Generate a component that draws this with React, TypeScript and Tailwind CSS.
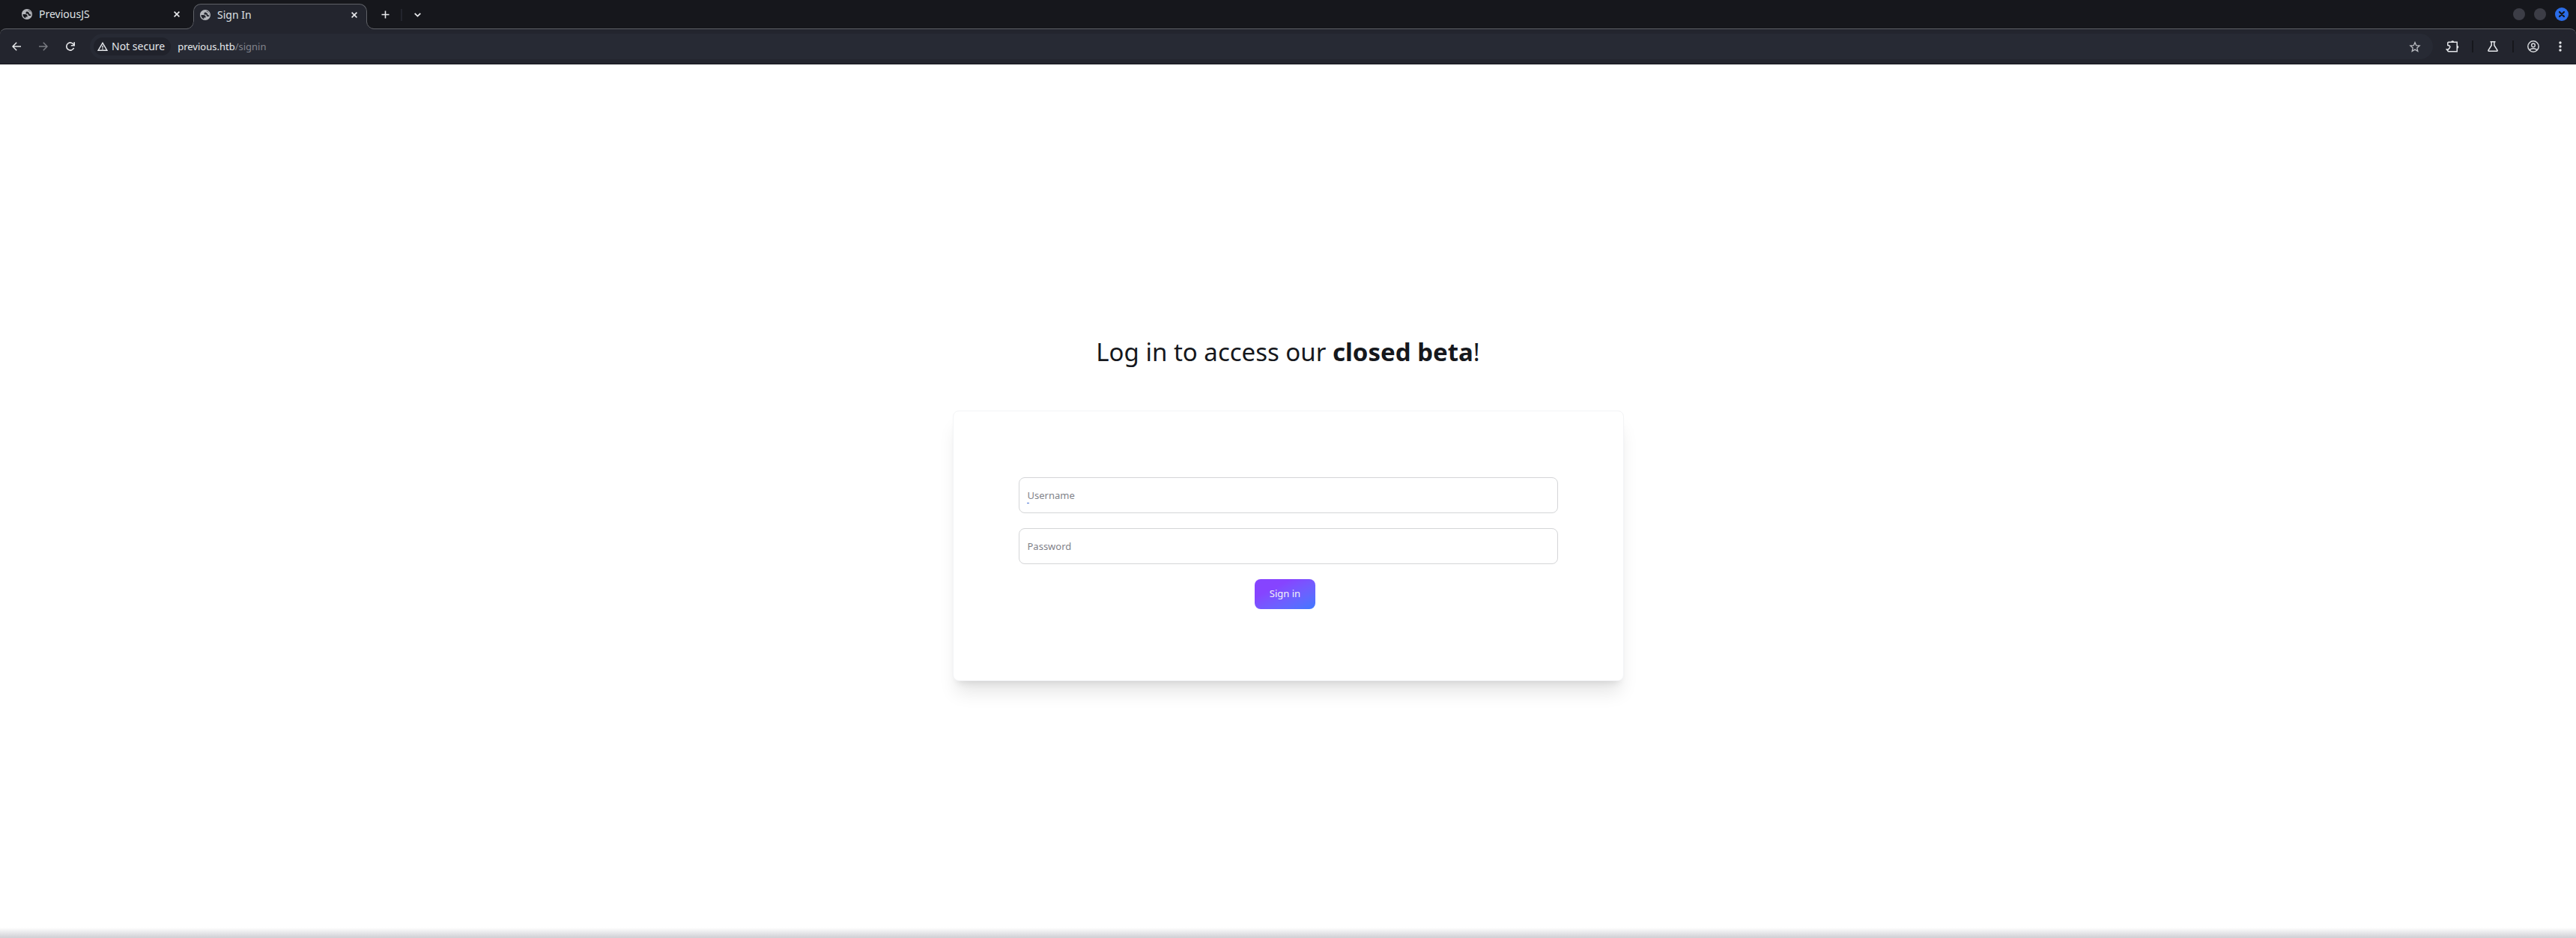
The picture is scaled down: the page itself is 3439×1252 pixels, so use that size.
import { useState } from "react";

type Tab = { id: string; title: string };

const tabs: Tab[] = [
  { id: "home", title: "PreviousJS" },
  { id: "signin", title: "Sign In" },
];

function GlobeIcon() {
  return (
    <svg width="14" height="14" viewBox="2 2 20 20" fill="#b4b6bb" className="shrink-0">
      <path d="M12 2C6.480 2 2 6.480 2 12s4.480 10 10 10 10-4.480 10-10S17.520 2 12 2zM4 12h4.400c3.400.020 4.900 1.730 4.500 5.130H9.500v2.470A8 8 0 0 1 4 12zm16 0c0 .6-.080 1.190-.2 1.760-.650.820-1.480 1.240-2.480 1.240-2.030 0-3.030-.830-3.030-2.500v-1.100h-4.400V9.100q0-2 2-2h1.300c0-1.200.3-2 1-2.500.6-.4 1.100-.3 1.500 0A8 8 0 0 1 20 12z" fillRule="evenodd" />
      <path d="M13.500 4.500L20 8v5l-3-1-1-3-3-2z" />
    </svg>
  );
}

function CloseIcon() {
  return (
    <svg width="8" height="8" viewBox="0 0 8 8" fill="none" stroke="#e8e9ec" strokeWidth="1.6">
      <path d="M.6.6l6.800 6.800M7.400.6L.6 7.400" />
    </svg>
  );
}

function TabStrip({ active, onSelect }: { active: string; onSelect: (id: string) => void }) {
  return (
    <div className="relative flex h-[38px] items-end justify-between bg-[#16171c] pr-[10px]">
      <div className="flex items-end pl-5">
        {tabs.map(t => {
          const on = t.id === active;
          return (
            <div key={t.id}
              className={on
                ? "relative z-10 -mb-px flex h-[34px] w-[232px] items-center rounded-t-[10px] border border-b-0 border-[#5f6167] bg-[#23252e] pr-3 pb-[6px] pl-2"
                : "flex h-[33px] w-[238px] items-center pr-[18px] pb-[6px] pl-[9px]"}>
              {on && (
                <>
                  <svg width="10" height="10" viewBox="0 0 10 10" className="absolute bottom-0 -left-[10px]">
                    <path d="M10 0v10H0V9.500A9.500 9.500 0 0 0 9.500 0z" fill="#23252e" />
                    <path d="M0 9.500A10 10 0 0 0 9.500 0" fill="none" stroke="#5f6167" />
                    <path d="M9.500 0H10v10H9.500z" fill="#23252e" />
                  </svg>
                  <svg width="10" height="10" viewBox="0 0 10 10" className="absolute -right-[10px] bottom-0">
                    <path d="M0 0v10h10V9.500A9.500 9.500 0 0 1 .5 0z" fill="#23252e" />
                    <path d="M10 9.500A10 10 0 0 1 .5 0" fill="none" stroke="#5f6167" />
                  </svg>
                </>
              )}
              <button onClick={() => onSelect(t.id)} className="flex min-w-0 flex-1 items-center gap-[9px] text-left text-sm text-[#dfe1e5]">
                <GlobeIcon />
                {t.title}
              </button>
              <button aria-label={`Close ${t.title}`}><CloseIcon /></button>
            </div>
          );
        })}
        <div className="flex h-[33px] items-center pb-1 pl-[19px]">
          <button aria-label="New tab">
            <svg width="11" height="11" viewBox="0 0 11 11" fill="none" stroke="#e8e9ec" strokeWidth="1.6">
              <path d="M5.500.5v10M.5 5.500h10" />
            </svg>
          </button>
          <span className="ml-[15px] h-4 w-[2px] bg-[#23252e]" />
          <button aria-label="Search tabs" className="ml-4">
            <svg width="9" height="6" viewBox="0 0 9 6" fill="none" stroke="#e8e9ec" strokeWidth="1.8">
              <path d="M.7.8l3.800 3.800L8.300.8" />
            </svg>
          </button>
        </div>
      </div>
      <div className="flex h-[38px] items-center gap-3">
        <button aria-label="Minimize" className="h-4 w-4 rounded-full bg-[#3c3d46]" />
        <button aria-label="Maximize" className="h-4 w-4 rounded-full bg-[#3c3d46]" />
        <button aria-label="Close window" className="flex h-[18px] w-[18px] items-center justify-center rounded-full bg-[#2b6de8]">
          <svg width="8" height="8" viewBox="0 0 8 8" fill="none" stroke="#14161c" strokeWidth="2.200" strokeLinecap="round">
            <path d="M1 1l6 6M7 1L1 7" />
          </svg>
        </button>
      </div>
    </div>
  );
}

function Toolbar() {
  return (
    <div className="bg-[#16171c]">
      <div className="flex h-12 items-center rounded-t-[8px] border-t border-b border-t-[#5f6167] border-b-[#15161b] bg-[#23252e] pr-[19px] pl-4">
        <button aria-label="Back">
          <svg width="12" height="12" viewBox="0 0 12 12" fill="none" stroke="#e8e9ec" strokeWidth="1.500">
            <path d="M12 6H1.200M6.200.8L1 6l5.200 5.200" />
          </svg>
        </button>
        <button aria-label="Forward" className="ml-6">
          <svg width="12" height="12" viewBox="0 0 12 12" fill="none" stroke="#7b7d84" strokeWidth="1.500">
            <path d="M0 6h10.800M5.800.8L11 6l-5.200 5.200" />
          </svg>
        </button>
        <button aria-label="Reload" className="ml-6">
          <svg width="12" height="12" viewBox="0 0 12 12" fill="none" stroke="#e8e9ec" strokeWidth="1.600">
            <path d="M10.600 8A5.100 5.100 0 1 1 10.300 3.400L11 4.600" />
            <path d="M11.200.2v4.600H6.800" />
          </svg>
        </button>
        <div className="ml-5 flex h-[34px] flex-1 items-center rounded-full bg-[#272a34] pr-4 pl-[5px]">
          <button className="flex h-6 items-center gap-[5px] rounded-full bg-[#20222b] pr-2 pl-[5px] text-sm text-[#e4e6ea]">
            <svg width="14" height="12" viewBox="0 0 14 12" fill="none" stroke="#e4e6ea" strokeWidth="1.400">
              <path d="M7 1.300L1.200 11.200h11.600z" />
              <path d="M7 4.700v3.100M7 8.500v1.400" />
            </svg>
            Not secure
          </button>
          <p className="ml-[9px] flex-1 pt-px text-[13px] text-[#e8eaed]">
            previous.htb<span className="text-[#82848c]">/signin</span>
          </p>
          <button aria-label="Bookmark this page">
            <svg width="16" height="15" viewBox="0 0 16 15" fill="none" stroke="#b9bbc1" strokeWidth="1.300">
              <path d="M8 1.600l1.700 4.100 4.400.4-3.300 2.900 1 4.400L8 11.100l-3.800 2.300 1-4.400L1.900 6.100l4.400-.4z" />
            </svg>
          </button>
        </div>
        <button aria-label="Extensions" className="ml-[17px]">
          <svg width="18" height="17" viewBox="0 0 18 17" fill="none" stroke="#e4e6ea" strokeWidth="1.500">
            <path d="M2.800 7V3.200q0-1 1-1h11.400v12.600H3.800q-1 0-1-1v-2.200" />
            <path d="M2.800 7c2.800-.6 3.800 1.200 2.400 3-.8 1-2 2.200-3 3L.6 11.200" />
            <path d="M7.200 2a2 1.800 0 0 1 4 0zM15.500 6.800a1.700 2 0 0 1 0 4z" fill="#e4e6ea" stroke="none" />
          </svg>
        </button>
        <span className="ml-[17px] h-4 w-[2px] bg-[#16171c]" />
        <button aria-label="Labs" className="ml-[19px]">
          <svg width="14" height="14" viewBox="0 0 14 14" fill="none" stroke="#e4e6ea" strokeWidth="1.500">
            <path d="M3.500.8h7M5.200.8v4.700L1 12.200q-.4 1 .6 1h10.800q1 0 .6-1L8.800 5.500V.8" />
          </svg>
        </button>
        <span className="ml-[19px] h-4 w-[2px] bg-[#16171c]" />
        <button aria-label="Profile" className="ml-[18px]">
          <svg width="16" height="16" viewBox="0 0 16 16" fill="none" stroke="#d4d6da" strokeWidth="1.500">
            <circle cx="8" cy="8" r="7.200" />
            <circle cx="8" cy="6.400" r="2.300" />
            <path d="M3 13c1-1.700 2.800-2.300 5-2.300s4 .6 5 2.300" />
          </svg>
        </button>
        <button aria-label="Menu" className="ml-[26px]">
          <svg width="4" height="14" viewBox="0 0 4 14" fill="#e4e6ea">
            <circle cx="2" cy="2" r="1.700" />
            <circle cx="2" cy="7" r="1.700" />
            <circle cx="2" cy="12" r="1.700" />
          </svg>
        </button>
      </div>
    </div>
  );
}

export default function App() {
  const [active, setActive] = useState("signin");
  const [username, setUsername] = useState("");
  const [password, setPassword] = useState("");

  return (
    <div className="flex min-h-screen flex-col bg-white font-['Noto_Sans',sans-serif]">
      <header>
        <TabStrip active={active} onSelect={setActive} />
        <Toolbar />
      </header>

      <main className="flex flex-1 flex-col items-center px-4 pt-[362px]">
        <h1 className="text-[33px] leading-[44px] font-normal text-[#16181d]">
          Log in to access our <b className="font-bold">closed beta</b>!
        </h1>
        <form onSubmit={e => e.preventDefault()}
          className="mt-14 flex w-full max-w-4xl flex-col items-center gap-5 rounded-lg border border-gray-100 bg-white px-[87px] pt-[88px] pb-[95px] shadow-xl">
          <label className="relative w-full">
            <input type="text" aria-label="Username" placeholder="Username" value={username} onChange={e => setUsername(e.target.value)}
              className="block h-12 w-full rounded-lg border border-[#d4d5d7] px-[11px] text-[13px] placeholder:text-[#7f8289]" />
            <span className="absolute top-[34px] left-[11px] h-px w-[3px] bg-[#4b74d6]" />
          </label>
          <label className="w-full">
            <input type="password" aria-label="Password" placeholder="Password" value={password} onChange={e => setPassword(e.target.value)}
              className="block h-12 w-full rounded-lg border border-[#d4d5d7] px-[11px] text-[13px] placeholder:text-[#7f8289]" />
          </label>
          <button type="submit"
            className="mr-2 h-10 rounded-lg bg-gradient-to-br from-[#8644ff] from-30% to-[#3b78ff] px-5 text-[13px] text-gray-100">
            Sign in
          </button>
        </form>
      </main>

      <div className="h-[14px] bg-gradient-to-b from-white to-[#cfcfd4]" />
    </div>
  );
}
